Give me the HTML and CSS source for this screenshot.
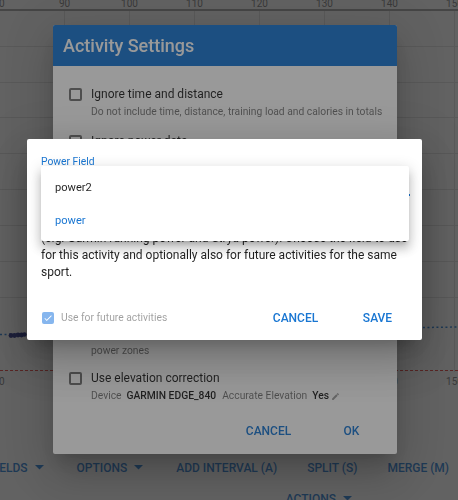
FILE: index.html
```html
<!DOCTYPE html>
<html lang="en">
<head>
<meta charset="utf-8">
<title>Activity Settings</title>
<link rel="stylesheet" href="styles.css">
</head>
<body>
<div class="page">
  <svg class="chart" width="458" height="452" viewBox="0 0 458 452">
    <g class="chart__grid">
      <line x1="64.5" y1="11" x2="64.5" y2="372"/>
      <line x1="129.5" y1="11" x2="129.5" y2="372"/>
      <line x1="194.5" y1="11" x2="194.5" y2="372"/>
      <line x1="259.5" y1="11" x2="259.5" y2="372"/>
      <line x1="324.5" y1="11" x2="324.5" y2="372"/>
      <line x1="389.5" y1="11" x2="389.5" y2="372"/>
      <line x1="454.5" y1="11" x2="454.5" y2="372"/>
      <line x1="0" y1="46.5" x2="458" y2="46.5"/>
      <line x1="0" y1="82.5" x2="458" y2="82.5"/>
      <line x1="0" y1="117.5" x2="458" y2="117.5"/>
      <line x1="0" y1="153.5" x2="458" y2="153.5"/>
      <line x1="0" y1="189.5" x2="458" y2="189.5"/>
      <line x1="0" y1="225.5" x2="458" y2="225.5"/>
      <line x1="0" y1="261.5" x2="458" y2="261.5"/>
      <line x1="0" y1="297.5" x2="458" y2="297.5"/>
    </g>
    <line class="chart__axis" x1="0" y1="10" x2="458" y2="10"/>
    <g class="chart__labels">
      <text x="-1" y="7">80</text>
      <text x="64.5" y="7">90</text>
      <text x="129.5" y="7">100</text>
      <text x="194.5" y="7">110</text>
      <text x="259.5" y="7">120</text>
      <text x="324.5" y="7">130</text>
      <text x="389.5" y="7">140</text>
      <text x="454.5" y="7">150</text>
    </g>
    <polyline class="chart__series" points="0,334.5 30,334 200,331 458,327"/>
    <g class="chart__dots">
      <circle cx="11" cy="335.5" r="2.4"/>
      <circle cx="14.5" cy="335.5" r="2.4"/>
      <circle cx="18" cy="335" r="2.4"/>
      <circle cx="21.5" cy="335" r="2.4"/>
      <circle cx="24.5" cy="334.5" r="2.2"/>
    </g>
    <line class="chart__threshold" x1="0" y1="370.5" x2="458" y2="370.5"/>
    <g class="chart__labels">
      <text x="-1" y="385">80</text>
      <text x="389.5" y="385">140</text>
      <text x="454.5" y="385">150</text>
    </g>
  </svg>
  <div class="toolbar">
    <span class="tbtn tbtn--menu">SHOW FIELDS <svg class="caret" width="9" height="5" viewBox="0 0 9 5"><polygon points="0,0 9,0 4.5,4.5"/></svg></span>
    <span class="tbtn tbtn--menu">OPTIONS <svg class="caret" width="9" height="5" viewBox="0 0 9 5"><polygon points="0,0 9,0 4.5,4.5"/></svg></span>
    <span class="tbtn">ADD INTERVAL (A)</span>
    <span class="tbtn">SPLIT (S)</span>
    <span class="tbtn">MERGE (M)</span>
  </div>
  <div class="toolbar toolbar--second">
    <span class="tbtn">ACTIONS <svg class="caret" width="9" height="5" viewBox="0 0 9 5"><polygon points="0,0 9,0 4.5,4.5"/></svg></span>
  </div>
</div>

<div class="scrim"></div>

<div class="dialog settings">
  <div class="settings__title">Activity Settings</div>
  <div class="settings__body">
    <div class="row">
      <span class="cb"></span>
      <div class="row__text">
        <div class="row__label">Ignore time and distance</div>
        <div class="row__desc">Do not include time, distance, training load and calories in totals</div>
      </div>
    </div>
    <div class="row row--spaced">
      <span class="cb"></span>
      <div class="row__text">
        <div class="row__label">Ignore power data</div>
        <div class="row__desc">Do not use power data for training load calculations</div>
      </div>
    </div>
    <div class="row">
      <span class="cb"></span>
      <div class="row__text">
        <div class="row__label">Ignore heart rate data</div>
        <div class="row__desc">Do not use heart rate data for training load<br>calculations</div>
      </div>
    </div>
    <div class="field">
      <div class="field__label">Power Field</div>
      <div class="field__value">power</div>
    </div>
    <div class="row">
      <span class="cb"></span>
      <div class="row__text">
        <div class="row__label">Use activity zones</div>
        <div class="row__desc row__desc--loose">Use zones from the activity file instead of the athlete heart rate and<br>power zones</div>
      </div>
    </div>
    <div class="row">
      <span class="cb"></span>
      <div class="row__text">
        <div class="row__label">Use elevation correction</div>
        <div class="row__desc row__desc--device">
          <span>Device</span><b>GARMIN EDGE_840</b><span>Accurate Elevation</span><b>Yes</b><svg class="edit" width="9" height="9" viewBox="0 0 24 24"><path d="M3 17.25V21h3.75L17.81 9.94l-3.75-3.75L3 17.25zM20.71 7.04a1 1 0 0 0 0-1.41l-2.34-2.34a1 1 0 0 0-1.41 0l-1.83 1.83 3.75 3.75 1.83-1.83z"/></svg>
        </div>
      </div>
    </div>
  </div>
  <div class="actions">
    <span class="btn">CANCEL</span>
    <span class="btn">OK</span>
  </div>
</div>

<div class="scrim"></div>

<div class="dialog power">
  <div class="power__content">
    <div class="power__label">Power Field</div>
    <div class="power__select">power</div>
    <p class="power__text">There are multiple power fields in this activity. This happens when more than one device or sensor records power<br>(e.g. Garmin running power and Stryd power). Choose the field to use for this activity and optionally also for future activities for the same sport.</p>
    <div class="menu">
      <div class="menu__item">power2</div>
      <div class="menu__item menu__item--active">power</div>
    </div>
  </div>
  <div class="power__footer">
    <span class="cb cb--checked"><svg width="10" height="10" viewBox="0 0 24 24"><path d="M9 16.170L4.83 12l-1.42 1.41L9 19 21 7l-1.41-1.41z"/></svg></span>
    <span class="power__future">Use for future activities</span>
    <span class="power__buttons">
      <span class="btn">CANCEL</span>
      <span class="btn">SAVE</span>
    </span>
  </div>
</div>
</body>
</html>
```
FILE: styles.css
```css
html, body {
  margin: 0;
  height: 100%;
  overflow: hidden;
}

body {
  background: #fff;
  font-family: Roboto, "Liberation Sans", sans-serif;
  color: rgba(0, 0, 0, 0.87);
}

.page {
  width: 458px;
}

.chart {
  display: block;
}

.chart__grid line {
  stroke: #e0e0e0;
  stroke-width: 1;
}

.chart__axis {
  stroke: #9e9e9e;
  stroke-width: 2;
}

.chart__labels text {
  font-family: Roboto, "Liberation Sans", sans-serif;
  font-size: 10px;
  fill: #757575;
  text-anchor: middle;
}

.chart__series {
  fill: none;
  stroke: #1976d2;
  stroke-width: 1.5;
  stroke-dasharray: 2 2.5;
}

.chart__dots circle {
  fill: #1a237e;
}

.chart__threshold {
  stroke: #e53935;
  stroke-width: 1;
  stroke-dasharray: 3 2;
}

/* toolbar under the chart */
.toolbar {
  display: flex;
  justify-content: flex-end;
  align-items: center;
  gap: 30px;
  height: 31px;
  padding-right: 9px;
  white-space: nowrap;
}

.toolbar--second {
  padding-right: 106px;
}

.tbtn {
  flex: none;
  display: inline-flex;
  align-items: center;
  gap: 7px;
  font-size: 12px;
  font-weight: 500;
  color: #1976d2;
}

.tbtn--menu {
  margin-right: 3px;
}

.caret {
  fill: #1976d2;
}

/* overlays */
.scrim {
  position: fixed;
  inset: 0;
  background: rgba(33, 33, 33, 0.46);
}

.dialog {
  position: fixed;
  box-sizing: border-box;
  background: #fff;
  border-radius: 2px;
  display: flex;
  flex-direction: column;
  box-shadow: 0 11px 15px -7px rgba(0, 0, 0, 0.2), 0 24px 38px 3px rgba(0, 0, 0, 0.14), 0 9px 46px 8px rgba(0, 0, 0, 0.12);
}

/* Activity settings dialog */
.settings {
  left: 53px;
  top: 25px;
  width: 344px;
  height: 429px;
  overflow: hidden;
}

.settings__title {
  height: 41px;
  padding: 0 10px;
  display: flex;
  align-items: center;
  background: #1976d2;
  color: #fff;
  font-size: 18px;
  font-weight: 500;
}

.settings__body {
  display: flex;
  flex-direction: column;
  gap: 11px;
  padding: 20px 6px 0 16px;
}

.row {
  display: flex;
  align-items: flex-start;
  gap: 9px;
}

.row--spaced {
  margin-top: 3px;
}

.cb {
  flex: none;
  box-sizing: border-box;
  width: 13px;
  height: 13px;
  margin-top: 2px;
  border: 2px solid rgba(0, 0, 0, 0.54);
  border-radius: 2px;
}

.row__label {
  font-size: 12px;
  line-height: 16px;
}

.row__desc {
  margin-top: 3px;
  font-size: 10.3px;
  line-height: 14px;
  color: rgba(0, 0, 0, 0.54);
  white-space: nowrap;
}

.row__desc--loose {
  line-height: 16px;
}

.row__desc--device {
  display: flex;
  align-items: center;
}

.row__desc--device span {
  margin-right: 5px;
}

.row__desc--device b {
  font-weight: 500;
  color: rgba(0, 0, 0, 0.87);
  margin-right: 6px;
}

.row__desc--device b:last-of-type {
  margin-right: 2px;
}

.edit {
  fill: rgba(0, 0, 0, 0.38);
}

.field {
  box-sizing: border-box;
  height: 62px;
  padding: 8px 0 0 22px;
}

.field__label {
  font-size: 10.3px;
  color: rgba(0, 0, 0, 0.54);
}

.field__value {
  margin-top: 6px;
  font-size: 12px;
  padding-bottom: 6px;
  border-bottom: 1px solid rgba(0, 0, 0, 0.42);
}

.actions {
  margin-top: auto;
  display: flex;
  justify-content: flex-end;
  gap: 8px;
  padding: 8px;
}

.btn {
  box-sizing: border-box;
  min-width: 75px;
  height: 31px;
  display: inline-flex;
  align-items: center;
  justify-content: center;
  font-size: 12px;
  font-weight: 500;
  color: #1976d2;
}

/* Power field dialog */
.power {
  left: 27px;
  top: 139px;
  width: 395px;
  height: 201px;
}

.power__content {
  position: relative;
  padding: 17px 12px 0 14px;
}

.power__label {
  font-size: 10.3px;
  line-height: 12px;
  color: #1976d2;
}

.power__select {
  box-sizing: border-box;
  height: 28px;
  padding-top: 4px;
  font-size: 12px;
  border-bottom: 2px solid #1976d2;
}

.power__text {
  margin: 0;
  font-size: 12px;
  line-height: 17px;
}

.menu {
  position: absolute;
  left: 14px;
  top: 27px;
  width: 368px;
  padding: 5px 0 4px;
  background: #fff;
  border-radius: 2px;
  box-shadow: 0 5px 5px -3px rgba(0, 0, 0, 0.2), 0 8px 10px 1px rgba(0, 0, 0, 0.14), 0 3px 14px 2px rgba(0, 0, 0, 0.12);
}

.menu__item {
  height: 33px;
  padding: 0 14px;
  display: flex;
  align-items: center;
  font-size: 11.1px;
  color: rgba(0, 0, 0, 0.87);
}

.menu__item--active {
  color: #1976d2;
}

.power__footer {
  margin-top: auto;
  display: flex;
  align-items: center;
  height: 31px;
  padding: 0 7px 7px 15px;
}

.cb--checked {
  width: 12px;
  height: 12px;
  margin-top: 0;
  border: none;
  background: #86b6ee;
  display: inline-flex;
  align-items: center;
  justify-content: center;
}

.cb--checked svg {
  fill: #fff;
}

.power__future {
  margin-left: 7px;
  font-size: 10.3px;
  color: rgba(0, 0, 0, 0.38);
}

.power__buttons {
  margin-left: auto;
  display: flex;
  gap: 7px;
}
```
